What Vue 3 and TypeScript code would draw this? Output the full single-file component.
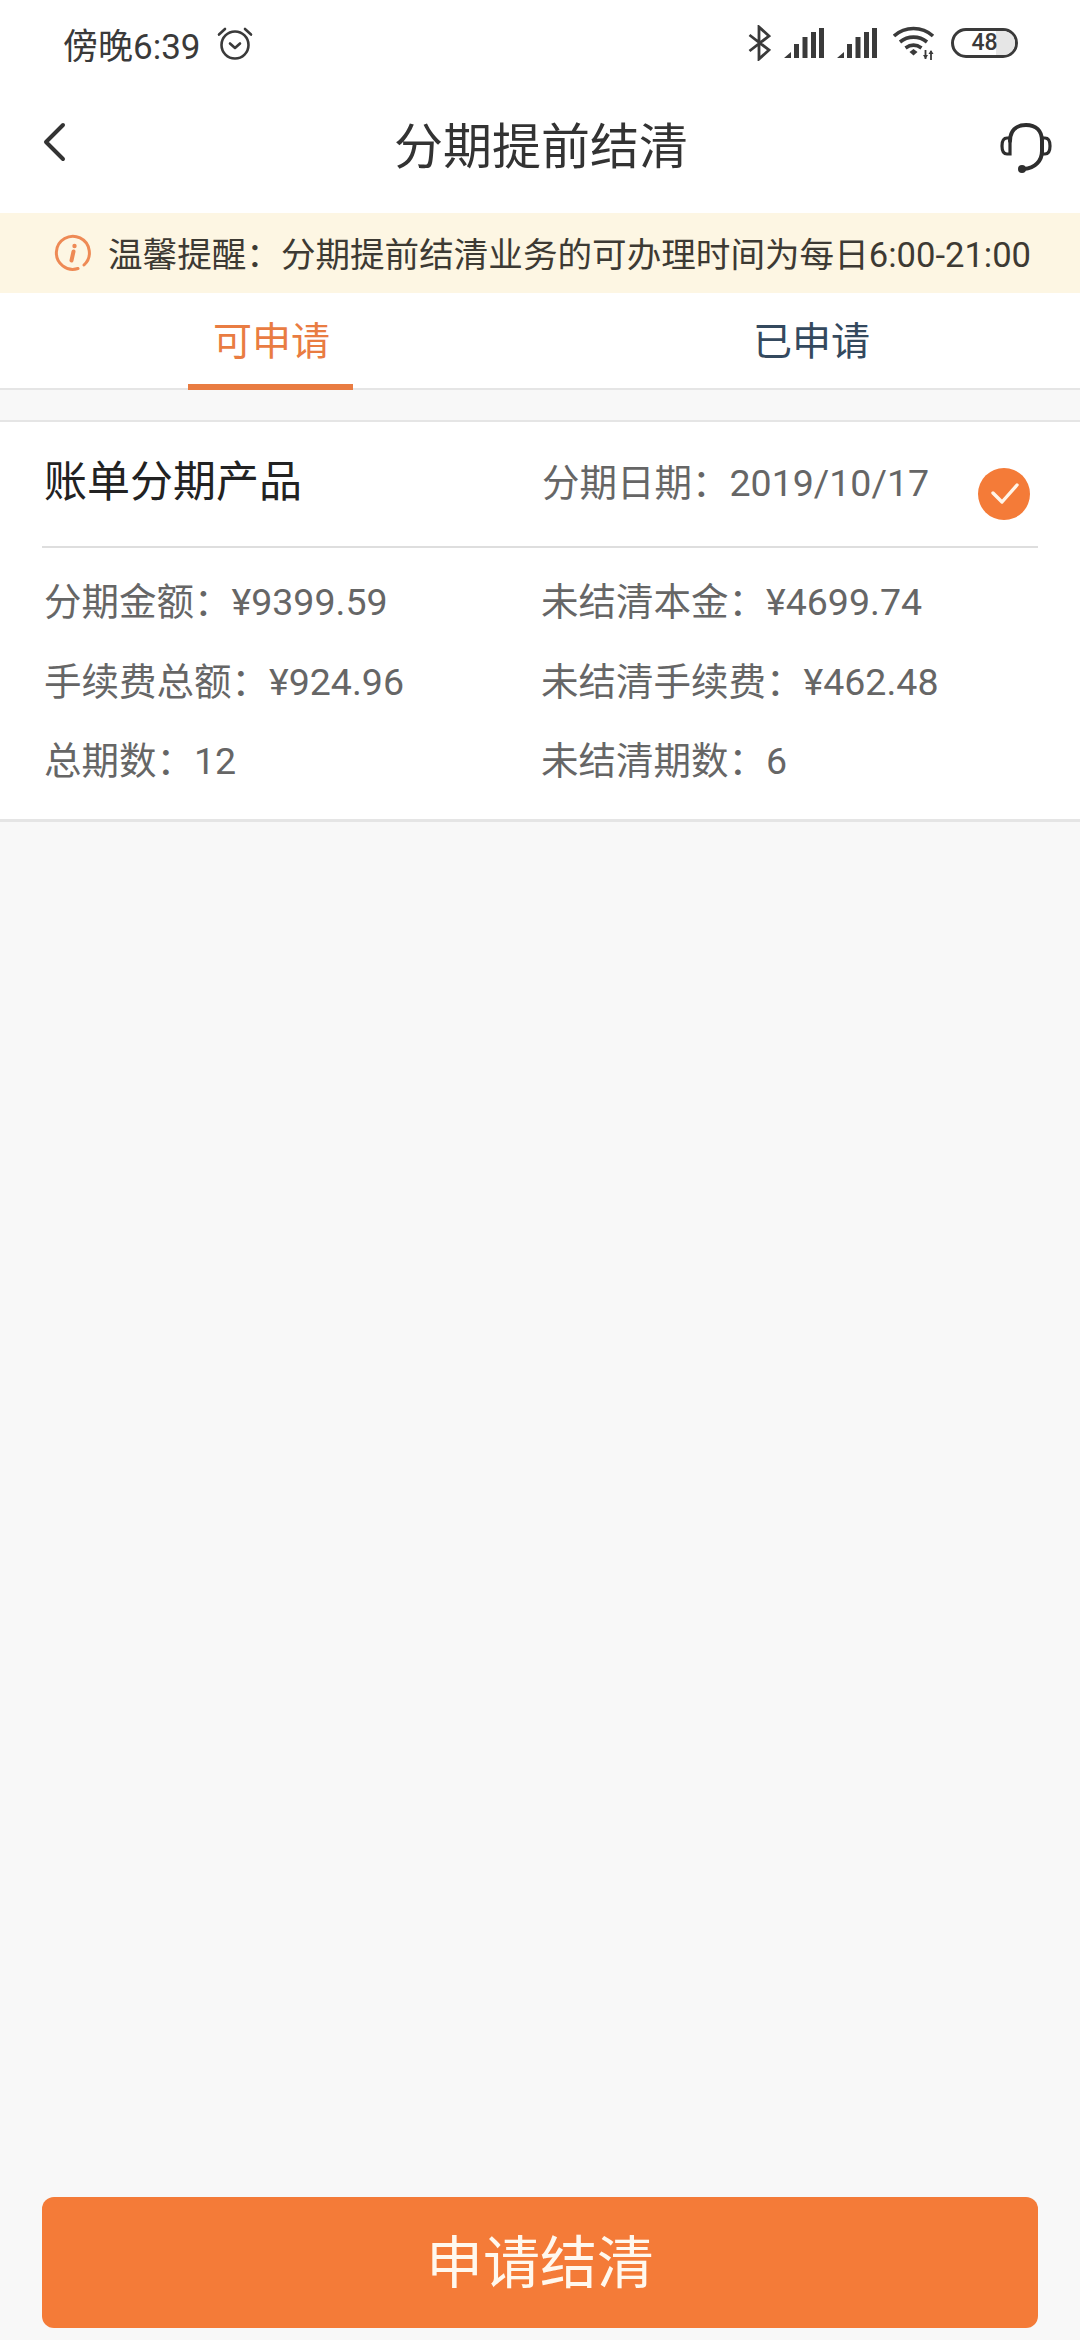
<script setup lang="ts">
const rows: [string, string][] = [
  ['分期金额:¥9399.59', '未结清本金:¥4699.74'],
  ['手续费总额:¥924.96', '未结清手续费:¥462.48'],
  ['总期数:12', '未结清期数:6'],
].map(([a, b]) => [a.replace(':', '\uFF1A'), b.replace(':', '\uFF1A')] as [string, string])
const notice = '温馨提醒\uFF1A分期提前结清业务的可办理时间为每日6:00-21:00'
const dateLabel = '分期日期\uFF1A2019/10/17'
</script>

<template>
  <div class="page">
    <div class="status">
      <div class="status-left">
        <span class="time">傍晚6:39</span>
        <svg class="alarm" width="36" height="36" viewBox="0 0 36 36" fill="none" stroke="#3a3a3a" stroke-width="2.6" stroke-linecap="round" stroke-linejoin="round">
          <circle cx="18" cy="20" r="13.500" />
          <path d="M13 18.500l5 4.500 5-4.500" />
          <path d="M2 9.500 8 4M34 9.500 28 4" />
        </svg>
      </div>
      <div class="status-right">
        <svg class="bt" width="23" height="36" viewBox="0 0 23 36" fill="none" stroke="#3a3a3a" stroke-width="2.800">
          <path d="M1.500 10 21 25 11 34V2l10 9L1.500 26" />
        </svg>
        <svg width="40" height="30" viewBox="0 0 40 30" fill="#3a3a3a">
          <path d="M0 30l7-6v6zM10 16h5v14h-5zM18.500 9h5v21h-5zM27 4h5v26h-5zM35 0h5v30h-5z" />
        </svg>
        <svg width="40" height="30" viewBox="0 0 40 30" fill="#3a3a3a">
          <path d="M0 30l7-6v6zM10 16h5v14h-5zM18.500 9h5v21h-5zM27 4h5v26h-5zM35 0h5v30h-5z" />
        </svg>
        <svg class="wifi" width="42" height="34" viewBox="0 0 42 34" fill="none" stroke="#3a3a3a" stroke-width="3.600">
          <path d="M1 10c11-10 28-10 39 0M7 16c8-6.500 19-6.500 27 0M12.500 22c5-3.500 11-3.500 16 0" />
          <path d="M16.500 26l4-3 4 3-4 3.500z" fill="#3a3a3a" stroke="none" />
          <path d="M32.500 24v9M38 25v9" stroke-width="1.800" />
          <path d="M30 29l2.500 4 2.500-4zM35.500 28l2.500-4 2.500 4z" fill="#3a3a3a" stroke="none" />
        </svg>
        <div class="battery"><span class="level"></span><span class="pct">48</span></div>
      </div>
    </div>

    <header class="nav">
      <svg class="back" width="24" height="40" viewBox="0 0 24 40" fill="none" stroke="#333" stroke-width="4" stroke-linecap="round" stroke-linejoin="round">
        <path d="M21 3 4 20l17 17" />
      </svg>
      <h1>分期提前结清</h1>
      <svg class="service" width="52" height="50" viewBox="0 0 52 50" fill="none" stroke="#2e2e2e" stroke-width="4" stroke-linecap="round">
        <path d="M10 18C10 8 16 2 26 2s16 6 16 16v10c0 10-7 17-18 18" />
        <path d="M10 15H7c-3 0-5 3-5 8s2 8 5 8h3zM42 15h3c3 0 5 3 5 8s-2 8-5 8h-3z" stroke-width="3.200" />
        <circle cx="22" cy="46" r="4" fill="#2e2e2e" stroke="none" />
      </svg>
    </header>

    <div class="notice">
      <svg width="38" height="38" viewBox="0 0 38 38" fill="none">
        <path d="M24 34.500A16.500 16.500 0 1 1 30 31" stroke="#ee8a55" stroke-width="3" stroke-linecap="round" />
        <circle cx="20.500" cy="12" r="2.200" fill="#ee8a55" />
        <path d="M19.500 17.500l-2 9" stroke="#ee8a55" stroke-width="4" stroke-linecap="round" />
      </svg>
      <span class="notice-text">{{ notice }}</span>
    </div>

    <div class="tabs">
      <div class="tab active">可申请<i></i></div>
      <div class="tab">已申请</div>
    </div>

    <section class="card">
      <div class="card-head">
        <span class="product">账单分期产品</span>
        <span class="date">{{ dateLabel }}</span>
        <svg class="check" width="52" height="52" viewBox="0 0 52 52" fill="none">
          <circle cx="26" cy="26" r="26" fill="#f47b38" />
          <path d="M15 25l9 9 15-17" stroke="#fff5e8" stroke-width="3.400" stroke-linecap="round" stroke-linejoin="round" />
        </svg>
      </div>
      <div class="grid">
        <template v-for="row in rows" :key="row[0]">
          <span>{{ row[0] }}</span>
          <span>{{ row[1] }}</span>
        </template>
      </div>
    </section>

    <div class="spacer"></div>
    <button class="submit">申请结清</button>
  </div>
</template>

<style scoped>
.page {
  width: 1080px;
  height: 2340px;
  display: flex;
  flex-direction: column;
  background: #f8f8f8;
  font-family: "Roboto", "Noto Sans CJK SC", sans-serif;
  overflow: hidden;
}
.status {
  height: 86px;
  padding: 0 62px 2px 63px;
  background: #fff;
  display: flex;
  align-items: center;
  justify-content: space-between;
}
.status-left { display: flex; align-items: center; gap: 16px; }
.time { font-size: 35px; color: #3a3a3a; }
.status-right { display: flex; align-items: center; gap: 13px; }
.wifi { margin-left: 3px; }
.battery {
  position: relative;
  width: 67px;
  height: 30px;
  border: 3.500px solid #3a3a3a;
  border-radius: 15px;
  box-sizing: border-box;
  overflow: hidden;
  margin-left: 3px;
  display: flex;
  align-items: center;
  justify-content: center;
}
.level { position: absolute; right: 0; top: 0; bottom: 0; width: 19px; background: #e6e6e6; }
.pct { position: relative; font-size: 23px; font-weight: 500; color: #3a3a3a; line-height: 22px; }
.nav {
  height: 125px;
  background: #fff;
  display: flex;
  align-items: center;
  justify-content: space-between;
  padding: 0 28px 17px 42px;
  box-sizing: border-box;
}
.nav h1 {
  margin: 0 0 0 16px;
  font-size: 49px;
  font-weight: 400;
  color: #333;
}
.service { margin-top: 12px; }
.notice {
  height: 80px;
  background: #fdf6e3;
  display: flex;
  align-items: center;
  gap: 16px;
  padding-left: 54px;
  font-size: 34.600px;
  color: #3d3a33;
  white-space: nowrap;
}
.notice-text { margin-top: -3px; }
.tabs {
  height: 95px;
  background: #fff;
  display: flex;
  border-bottom: 2px solid #e5e5e5;
}
.tab {
  position: relative;
  flex: 1;
  display: flex;
  align-items: center;
  justify-content: center;
  padding-bottom: 6px;
  padding-left: 3px;
  font-size: 39px;
  color: #34495e;
}
.tab.active { color: #e97c42; }
.tab i {
  position: absolute;
  left: 188px;
  width: 165px;
  bottom: -2px;
  height: 6px;
  background: #e97c42;
}
.card {
  margin-top: 30px;
  background: #fff;
  border-top: 2px solid #e5e5e5;
  border-bottom: 3px solid #e5e5e5;
  padding: 0 42px;
  height: 402px;
  box-sizing: border-box;
}
.card-head {
  height: 124px;
  display: flex;
  align-items: center;
  border-bottom: 2px solid #dedede;
  position: relative;
}
.product { width: 498px; font-size: 43px; color: #222; padding-left: 2px; padding-bottom: 12px; }
.date { font-size: 37.500px; color: #666; padding-bottom: 10px; }
.check { position: absolute; right: 8px; top: 46px; }
.grid {
  display: grid;
  grid-template-columns: 497px 1fr;
  padding: 15px 0 0 2px;
  font-size: 37.500px;
  color: #666;
  line-height: 79.500px;
}
.spacer { flex: 1; }
.submit {
  margin: 0 42px 12px;
  height: 131px;
  flex: none;
  background: #f47b38;
  border: 0;
  border-radius: 12px;
  color: #fff8ee;
  font-family: inherit;
  font-size: 57px;
  padding: 0 0 10px;
}
</style>
